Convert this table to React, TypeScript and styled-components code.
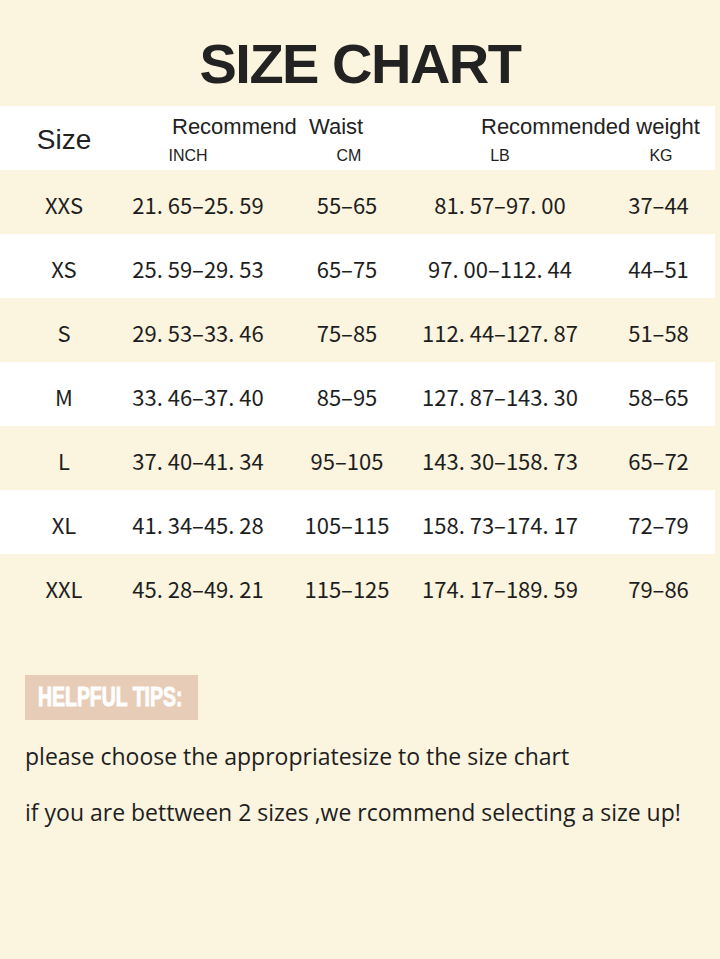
import { createGlobalStyle, styled } from "styled-components";

const GlobalStyle = createGlobalStyle`
  html, body {
    margin: 0;
    padding: 0;
    background: #fbf4de;
  }
`;

const Page = styled.div`
  width: 720px;
  min-height: 959px;
  background: #fbf4de;
  display: flex;
  flex-direction: column;
  color: #1e1e1e;
  font-family: "Liberation Sans", Arial, sans-serif;
`;

const Title = styled.h1`
  margin: 36px 0 14px;
  font-size: 56px;
  line-height: 56px;
  font-weight: 700;
  text-align: center;
  letter-spacing: -1.5px;
  color: #222;
`;

const Table = styled.div`
  width: 715px;
  display: flex;
  flex-direction: column;
`;

const HeaderBand = styled.div`
  height: 64px;
  background: #fff;
  display: grid;
  grid-template-columns: 128px 300px 1fr;
  align-items: center;
`;

const SizeHead = styled.div`
  text-align: center;
  font-size: 28px;
  padding-top: 4px;
  color: #222;
`;

const Group = styled.div`
  display: flex;
  flex-direction: column;
  gap: 7px;
  padding-top: 4px;
`;

const GroupTitle = styled.div<{ $pad: number }>`
  padding-left: ${(p) => p.$pad}px;
  font-size: 22px;
  line-height: 24px;
  color: #222;
  white-space: pre;
`;

const SubRow = styled.div<{ $pad: number }>`
  display: flex;
  gap: 121px;
  padding-left: ${(p) => p.$pad}px;
`;

const SubLabel = styled.span`
  width: 40px;
  text-align: center;
  font-size: 16px;
  line-height: 20px;
  color: #222;
`;

const Row = styled.div<{ $white: boolean }>`
  height: 64px;
  background: ${(p) => (p.$white ? "#fff" : "transparent")};
  display: grid;
  grid-template-columns: 128px 140px 158px 148px 1fr;
  align-items: center;
  justify-items: center;
  font-family: "Noto Sans CJK SC", "Liberation Sans", sans-serif;
  font-size: 22px;
  color: #1e1e1e;
  & > :nth-child(5) {
    padding-left: 28px;
  }
`;

const Cell = styled.span`
  white-space: pre;
  padding-top: 3px;
`;

const Tips = styled.div`
  margin-top: 57px;
  padding-left: 25px;
  display: flex;
  flex-direction: column;
  align-items: flex-start;
`;

const Badge = styled.div`
  width: 173px;
  height: 45px;
  background: #e7cdb8;
  display: flex;
  align-items: center;
  padding-left: 13px;
  box-sizing: border-box;
  overflow: hidden;
`;

const BadgeText = styled.span`
  display: inline-block;
  font-family: "Liberation Sans", Arial, sans-serif;
  font-weight: 900;
  font-size: 27px;
  color: #fff;
  white-space: nowrap;
  transform: scaleX(0.72);
  transform-origin: left center;
  -webkit-text-stroke: 1px #fff;
`;

const TipLine = styled.p<{ $top: number }>`
  margin: ${(p) => p.$top}px 0 0;
  font-family: "Open Sans", sans-serif;
  font-size: 23px;
  line-height: 30px;
  color: #1e1e1e;
`;

const rows = [
  ["XXS", "21. 65–25. 59", "55–65", "81. 57–97. 00", "37–44"],
  ["XS", "25. 59–29. 53", "65–75", "97. 00–112. 44", "44–51"],
  ["S", "29. 53–33. 46", "75–85", "112. 44–127. 87", "51–58"],
  ["M", "33. 46–37. 40", "85–95", "127. 87–143. 30", "58–65"],
  ["L", "37. 40–41. 34", "95–105", "143. 30–158. 73", "65–72"],
  ["XL", "41. 34–45. 28", "105–115", "158. 73–174. 17", "72–79"],
  ["XXL", "45. 28–49. 21", "115–125", "174. 17–189. 59", "79–86"],
];

export default function App() {
  return (
    <Page>
      <GlobalStyle />
      <Title>SIZE CHART</Title>
      <Table>
        <HeaderBand>
          <SizeHead>Size</SizeHead>
          <Group>
            <GroupTitle $pad={44}>{"Recommend  Waist"}</GroupTitle>
            <SubRow $pad={40}>
              <SubLabel>INCH</SubLabel>
              <SubLabel>CM</SubLabel>
            </SubRow>
          </Group>
          <Group>
            <GroupTitle $pad={53}>Recommended weight</GroupTitle>
            <SubRow $pad={52}>
              <SubLabel>LB</SubLabel>
              <SubLabel>KG</SubLabel>
            </SubRow>
          </Group>
        </HeaderBand>
        {rows.map((r, i) => (
          <Row key={r[0]} $white={i % 2 === 1}>
            {r.map((c, j) => (
              <Cell key={j}>{c}</Cell>
            ))}
          </Row>
        ))}
      </Table>
      <Tips>
        <Badge>
          <BadgeText>HELPFUL TIPS:</BadgeText>
        </Badge>
        <TipLine $top={21}>please choose the appropriatesize to the size chart</TipLine>
        <TipLine $top={26}>if you are bettween 2 sizes ,we rcommend selecting a size up!</TipLine>
      </Tips>
    </Page>
  );
}
